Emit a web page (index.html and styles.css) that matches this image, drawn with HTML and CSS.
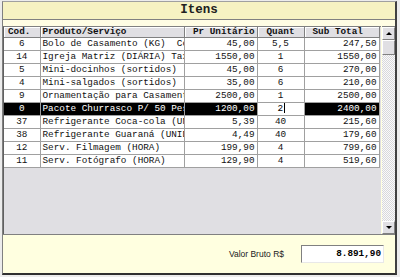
FILE: index.html
```html
<!DOCTYPE html>
<html lang="pt-BR">
<head>
  <meta charset="UTF-8">
  <title>Itens</title>
  <link rel="stylesheet" href="styles.css">
</head>
<body>

  <div class="janela">
    <div class="titulo">Itens</div>
    <div class="faixa"></div>

    <!-- Grade de itens -->
    <div class="grade">
      <div class="area-tabela">
        <table class="tabela">
          <colgroup>
            <col class="c-cod">
            <col class="c-prod">
            <col class="c-preco">
            <col class="c-quant">
            <col class="c-sub">
          </colgroup>
          <thead>
            <tr>
              <th class="h-cod">Cod.</th>
              <th class="h-prod">Produto/Serviço</th>
              <th class="h-preco">Pr Unitário</th>
              <th class="h-quant">Quant</th>
              <th class="h-sub">Sub Total</th>
            </tr>
          </thead>
          <tbody>
            <tr><td class="cod">6</td><td class="prod">Bolo de Casamento (KG)  Com cobertura</td><td class="num">45,00</td><td class="qtd">5,5</td><td class="num">247,50</td></tr>
            <tr><td class="cod">14</td><td class="prod">Igreja Matriz (DIÁRIA) Taxa</td><td class="num">1550,00</td><td class="qtd">1</td><td class="num">1550,00</td></tr>
            <tr><td class="cod">5</td><td class="prod">Mini-docinhos (sortidos)</td><td class="num">45,00</td><td class="qtd">6</td><td class="num">270,00</td></tr>
            <tr><td class="cod">4</td><td class="prod">Mini-salgados (sortidos)</td><td class="num">35,00</td><td class="qtd">6</td><td class="num">210,00</td></tr>
            <tr><td class="cod">9</td><td class="prod">Ornamentação para Casamento</td><td class="num">2500,00</td><td class="qtd">1</td><td class="num">2500,00</td></tr>
            <tr class="selecionada"><td class="cod">0</td><td class="prod">Pacote Churrasco P/ 50 Pessoas</td><td class="num">1200,00</td><td class="qtd editando"><span class="valor-edit">2</span><span class="cursor"></span></td><td class="num">2400,00</td></tr>
            <tr><td class="cod">37</td><td class="prod">Refrigerante Coca-cola (UNID)</td><td class="num">5,39</td><td class="qtd">40</td><td class="num">215,60</td></tr>
            <tr><td class="cod">38</td><td class="prod">Refrigerante Guaraná (UNID)</td><td class="num">4,49</td><td class="qtd">40</td><td class="num">179,60</td></tr>
            <tr><td class="cod">12</td><td class="prod">Serv. Filmagem (HORA)</td><td class="num">199,90</td><td class="qtd">4</td><td class="num">799,60</td></tr>
            <tr><td class="cod">11</td><td class="prod">Serv. Fotógrafo (HORA)</td><td class="num">129,90</td><td class="qtd">4</td><td class="num">519,60</td></tr>
          </tbody>
        </table>
      </div>

      <!-- Barra de rolagem -->
      <div class="rolagem">
        <div class="botao-rol"><span class="seta-cima"></span></div>
        <div class="polegar"></div>
        <div class="trilha"></div>
        <div class="botao-rol"><span class="seta-baixo"></span></div>
      </div>
    </div>

    <!-- Total -->
    <div class="rodape">
      <span class="rotulo">Valor Bruto R$</span>
      <div class="campo-total">8.891,90</div>
    </div>
  </div>

</body>
</html>
```

FILE: styles.css
```css
body {
  margin: 0;
  background: #ececec;
  font-family: 'Liberation Mono', 'Courier New', monospace;
}

.janela {
  width: 392px;
  margin: 1px 0 0 2px;
  border-left: 1px solid #808080;
  border-top: 1px solid #a0a0a0;
  border-right: 2px solid #404040;
  border-bottom: 2px solid #303030;
  background: #ffffe0;
}

.titulo {
  height: 17px;
  line-height: 17px;
  background: #f6f2c2;
  border-bottom: 1px solid #808080;
  text-align: center;
  font-weight: bold;
  font-size: 12.5px;
  color: #202020;
}

.faixa {
  height: 6px;
  background: #fffde4;
}

.grade {
  display: flex;
  height: 208px;
  border-bottom: 1px solid #808080;
}

.area-tabela {
  width: 378px;
  background: #e0dfe3;
  border-left: 1px solid #606060;
  border-top: 1px solid #808080;
  overflow: hidden;
}

.tabela {
  border-collapse: collapse;
  table-layout: fixed;
  width: 375px;
  font-size: 9.33px;
  color: #111;
}

.c-cod { width: 36px; }
.c-prod { width: 144px; }
.c-preco { width: 73px; }
.c-quant { width: 47px; }
.c-sub { width: 75px; }

.tabela th {
  height: 10px;
  padding: 0 2px;
  background: #e0dfe3;
  border-right: 1px solid #808080;
  border-bottom: 1px solid #808080;
  box-shadow: inset 1px 1px 0 #fff;
  font-weight: bold;
  text-align: left;
  white-space: nowrap;
  overflow: hidden;
  line-height: 10px;
}

.h-cod { padding-left: 4px !important; }
.h-preco { text-align: right !important; padding-right: 2px !important; }
.h-quant { text-align: center !important; }
.h-sub { padding-left: 8px !important; }

.tabela td {
  height: 12px;
  padding: 0 2px;
  background: #fff;
  border-right: 1px solid #a0a0a0;
  border-bottom: 1px solid #a0a0a0;
  white-space: nowrap;
  overflow: hidden;
  line-height: 12px;
}

.tabela td.prod {
  white-space: pre;
}

.tabela td.cod,
.tabela td.qtd {
  text-align: center;
}

.tabela td.num {
  text-align: right;
}

.selecionada td {
  background: #000;
  color: #fff;
}

.selecionada td.editando {
  background: #fff;
  color: #000;
  text-align: left;
  padding-left: 20px;
}

.cursor {
  display: inline-block;
  width: 1px;
  height: 10px;
  margin-left: 1px;
  background: #000;
  vertical-align: -2px;
}

/* Barra de rolagem */
.rolagem {
  width: 13px;
  margin-left: 1px;
  display: flex;
  flex-direction: column;
  border-top: 1px solid #808080;
  background-color: #f4f4f4;
  background-image: repeating-conic-gradient(#d8d8dc 0 25%, #fafafa 0 50%);
  background-size: 2px 2px;
}

.botao-rol,
.polegar {
  height: 11px;
  background: #e0dfe3;
  border-top: 1px solid #fff;
  border-left: 1px solid #fff;
  border-right: 1px solid #808080;
  border-bottom: 1px solid #808080;
  display: flex;
  align-items: center;
  justify-content: center;
}

.polegar {
  height: 13px;
}

.trilha {
  flex: 1;
}

.seta-cima {
  width: 0;
  height: 0;
  border-left: 3px solid transparent;
  border-right: 3px solid transparent;
  border-bottom: 3px solid #000;
}

.seta-baixo {
  width: 0;
  height: 0;
  border-left: 3px solid transparent;
  border-right: 3px solid transparent;
  border-top: 3px solid #000;
}

/* Rodape com total */
.rodape {
  height: 38px;
  display: flex;
  align-items: center;
  justify-content: flex-end;
  padding-right: 11px;
}

.rotulo {
  font-family: 'Liberation Sans', Arial, sans-serif;
  font-size: 8.5px;
  color: #202020;
  margin-right: 17px;
}

.campo-total {
  width: 79px;
  height: 16px;
  line-height: 16px;
  padding-right: 2px;
  text-align: right;
  background: #fff;
  border-top: 1px solid #808080;
  border-left: 1px solid #808080;
  border-right: 1px solid #e8e8e8;
  border-bottom: 1px solid #e8e8e8;
  font-weight: bold;
  font-size: 9.33px;
  color: #000;
}
```
